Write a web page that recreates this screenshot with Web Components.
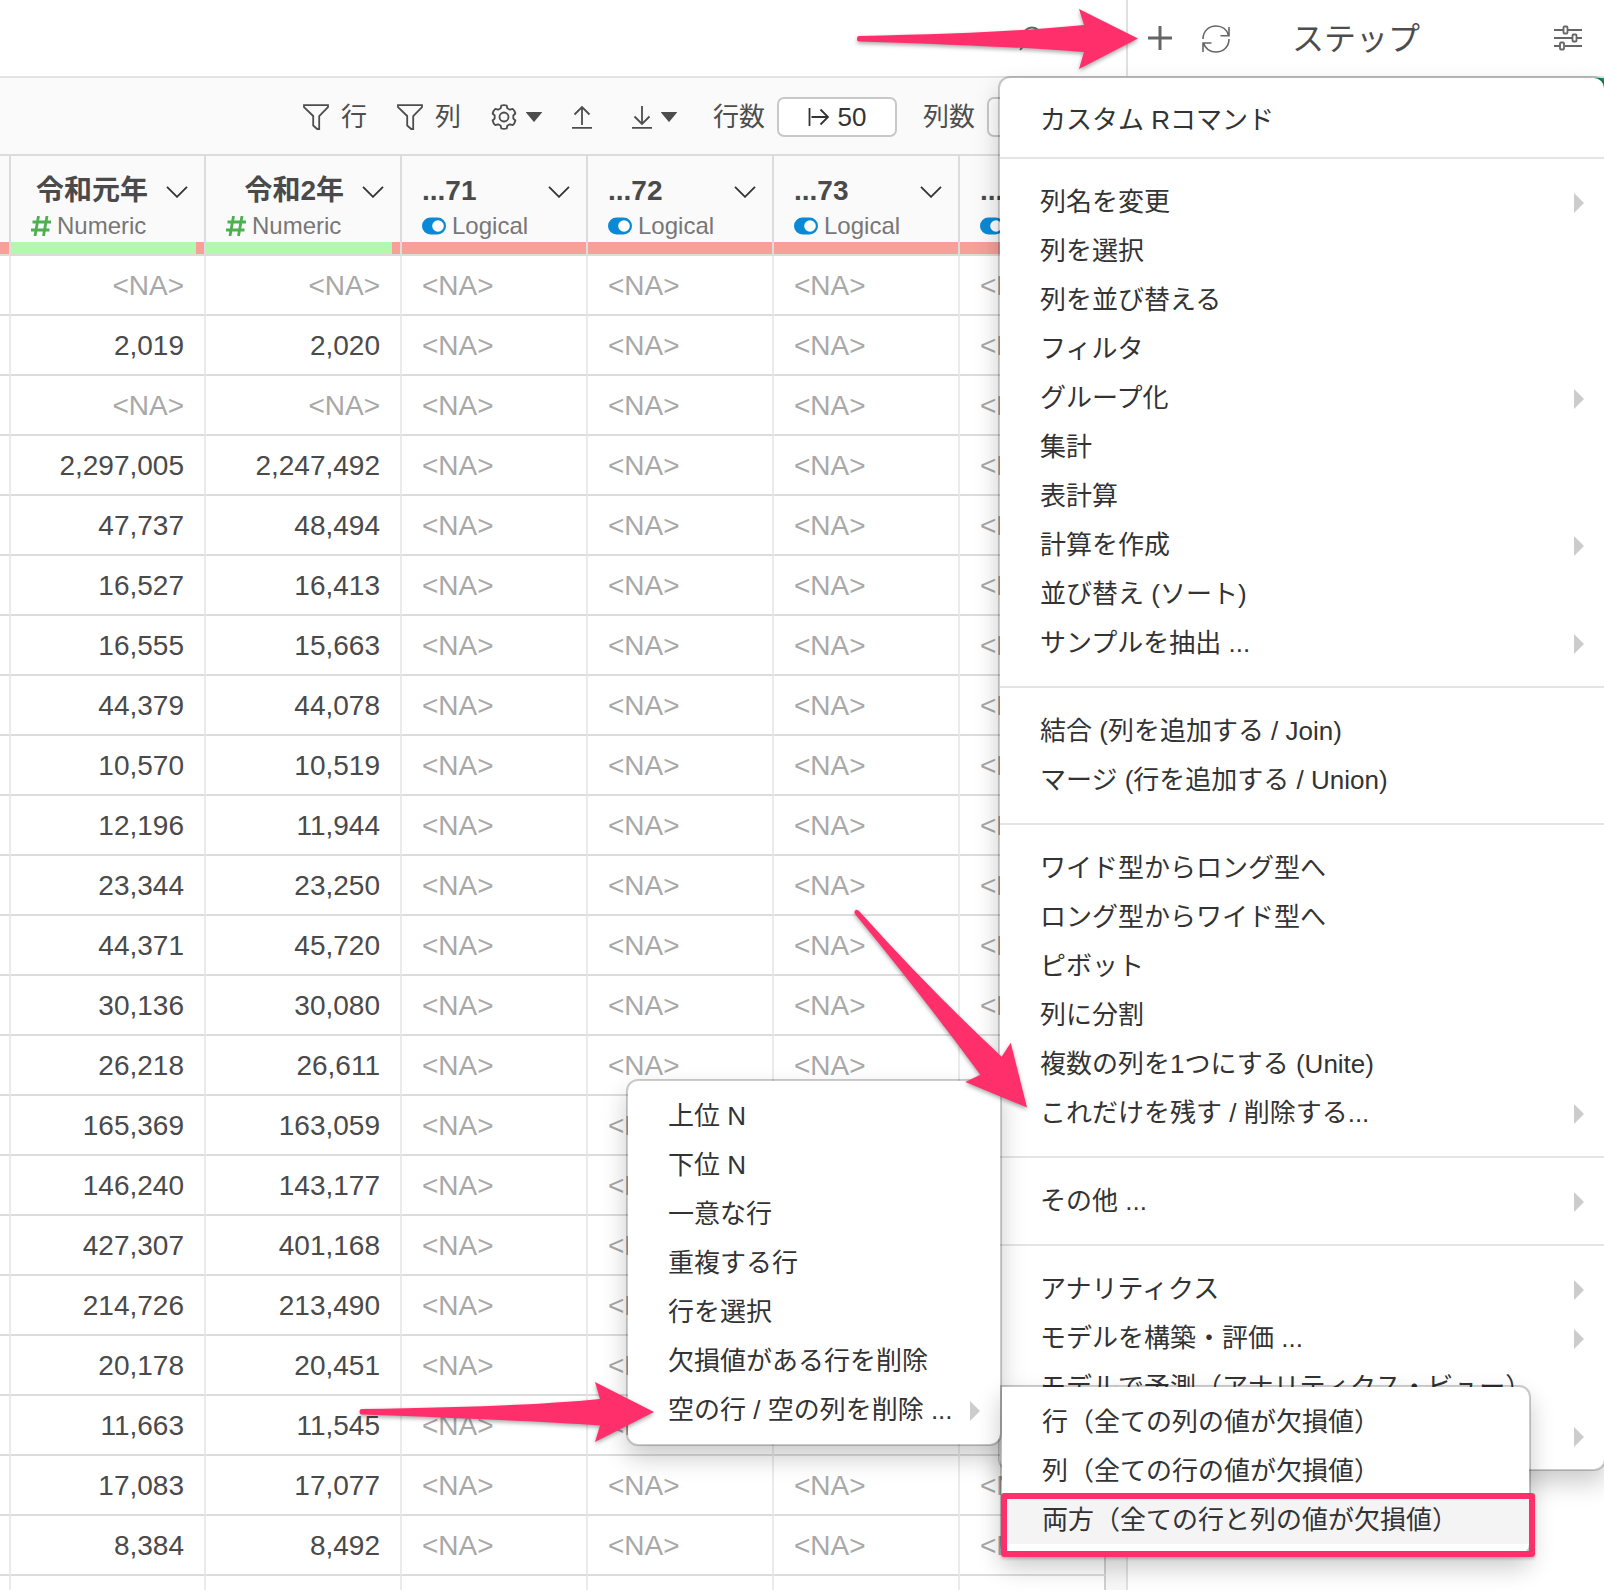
<!DOCTYPE html>
<html lang="ja">
<head>
<meta charset="utf-8">
<title>ステップ</title>
<style>
    body {
        margin: 0;
        font-family: "Liberation Sans", "Noto Sans CJK JP", sans-serif;
        font-size: 26px;
        color: #333;
        background: white;
    }
</style>
</head>
<body>
<data-app>
    <top-bar slot="top"></top-bar>
    <tool-bar slot="main"></tool-bar>
    <data-grid slot="main"></data-grid>
    <step-panel slot="side"></step-panel>

    <drop-menu slot="over" id="steps">
        <menu-group class="lead">
            <menu-item>カスタム Rコマンド</menu-item>
        </menu-group>
        <menu-group>
            <menu-item more>列名を変更</menu-item>
            <menu-item>列を選択</menu-item>
            <menu-item>列を並び替える</menu-item>
            <menu-item>フィルタ</menu-item>
            <menu-item more>グループ化</menu-item>
            <menu-item>集計</menu-item>
            <menu-item>表計算</menu-item>
            <menu-item more>計算を作成</menu-item>
            <menu-item>並び替え (ソート)</menu-item>
            <menu-item more>サンプルを抽出 ...</menu-item>
        </menu-group>
        <menu-group>
            <menu-item>結合 (列を追加する / Join)</menu-item>
            <menu-item>マージ (行を追加する / Union)</menu-item>
        </menu-group>
        <menu-group>
            <menu-item>ワイド型からロング型へ</menu-item>
            <menu-item>ロング型からワイド型へ</menu-item>
            <menu-item>ピボット</menu-item>
            <menu-item>列に分割</menu-item>
            <menu-item>複数の列を1つにする (Unite)</menu-item>
            <menu-item more>これだけを残す / 削除する...</menu-item>
        </menu-group>
        <menu-group>
            <menu-item more>その他 ...</menu-item>
        </menu-group>
        <menu-group class="tail">
            <menu-item more>アナリティクス</menu-item>
            <menu-item more>モデルを構築・評価 ...</menu-item>
            <menu-item>モデルで予測（アナリティクス・ビュー）</menu-item>
            <menu-item more></menu-item>
        </menu-group>
    </drop-menu>

    <drop-menu slot="over" id="keep">
        <menu-group class="only">
            <menu-item>上位 N</menu-item>
            <menu-item>下位 N</menu-item>
            <menu-item>一意な行</menu-item>
            <menu-item>重複する行</menu-item>
            <menu-item>行を選択</menu-item>
            <menu-item>欠損値がある行を削除</menu-item>
            <menu-item more>空の行 / 空の列を削除 ...</menu-item>
        </menu-group>
    </drop-menu>

    <drop-menu slot="over" id="empty">
        <menu-group class="only">
            <menu-item>行（全ての列の値が欠損値）</menu-item>
            <menu-item>列（全ての行の値が欠損値）</menu-item>
            <menu-item active>両方（全ての行と列の値が欠損値）</menu-item>
        </menu-group>
    </drop-menu>

    <mark-layer slot="over"></mark-layer>
</data-app>

<script>
function attach(el, html) {
    const template = document.createElement('template');
    template.innerHTML = html;
    el.attachShadow({ mode: 'open' }).appendChild(template.content.cloneNode(true));
}

const ICONS = {
    filter: [26, 26, '<path d="M1 1.2h24v2L16.2 12v13h-2l-4-3.5V12L1 3.2z"/>'],
    gear: [26, 26, '<path d="M10.3 1.500Q13 .6 15.700 1.500L16.300 4.300 18.800 5.700 21.700 4.800Q23.800 6.700 24.400 9.500L22.300 11.500V14.500L24.400 16.500Q23.800 19.300 21.700 21.200L18.800 20.300 16.300 21.700 15.700 24.500Q13 25.400 10.300 24.500L9.700 21.700 7.200 20.300 4.300 21.200Q2.200 19.300 1.600 16.500L3.700 14.500V11.500L1.600 9.500Q2.200 6.700 4.300 4.800L7.200 5.700 9.700 4.300z" stroke-linejoin="round"/><circle cx="13" cy="13" r="4.500"/>'],
    caret: [16, 10, '<path d="M1.500 1h13L8 8.700z" fill="currentColor"/>'],
    upload: [20, 24, '<path d="M10 20V2M2.500 9.500 10 2l7.500 7.500M0 22.800h20"/>'],
    download: [20, 24, '<path d="M10 1v18M2.500 11.500 10 19l7.500-7.500M0 22.800h20"/>'],
    range: [22, 20, '<path d="M1.500 1v18M3.500 10H20M12.500 2.500 20 10l-7.500 7.500"/>'],
    chevron: [22, 12, '<path d="M1 .8 11 10.800 21 .8"/>'],
    plus: [24, 24, '<path d="M12 0v24M0 12h24" stroke-width="3"/>'],
    search: [24, 26, '<circle cx="14" cy="12" r="9.500"/><path d="M7.500 19 2 25"/>'],
    refresh: [28, 28, '<path d="M1 14C1 6 7 1 14 1c6 0 11 3.500 12.500 9.500M27 2v8.700h-8.500M27 14c0 8-6 13-13 13C8 27 3 23.500 1.500 18M1 27v-9h8.500" stroke-width="1.600"/>'],
    sliders: [28, 26, '<path d="M0 5h9M14 5h14M0 13h18M23 13h5M0 21h6M11 21h17"/><rect x="9.500" y="1.500" width="4" height="7" rx="1"/><rect x="18.500" y="9.500" width="4" height="7" rx="1"/><rect x="6" y="17.500" width="4" height="7" rx="1"/>'],
    hash: [20, 20, '<path d="M7.500 0 4 20M16 0l-3.500 20M1.500 6H20M0 14h18.500" stroke-width="2.800"/>'],
    toggle: [24, 18, '<rect y=".5" width="24" height="17" rx="8.500" fill="currentColor" stroke="none"/><circle cx="16" cy="9" r="5.800" fill="white" stroke="none"/>']
};

class UiIcon extends HTMLElement {
    constructor() {
        super();
        const [w, h, body] = ICONS[this.getAttribute('name')];
        attach(this, `
<style>
    :host { display: inline-flex; flex: none; }
    svg { display: block; }
</style>
<svg width="${w}" height="${h}" viewBox="0 0 ${w} ${h}" fill="none" stroke="currentColor" stroke-width="1.800" aria-hidden="true">${body}</svg>`);
    }
}

class DataApp extends HTMLElement {
    constructor() {
        super();
        attach(this, `
<style>
    :host {
        position: relative;
        display: grid;
        grid-template-columns: minmax(0, 1fr) 478px;
        grid-template-rows: 78px minmax(0, 1fr);
        height: 100vh;
        overflow: hidden;
    }
    .main { grid-row: 2; grid-column: 1; min-width: 0; overflow: hidden; }
    .side { grid-row: 1 / 3; grid-column: 2; display: flex; }
    ::slotted(step-panel) { flex: 1; }
    ::slotted(drop-menu) { position: absolute; }
    ::slotted(#steps) { top: 76px; right: -2px; width: 608px; }
    ::slotted(#keep) { top: 1079px; right: 602px; width: 376px; }
    ::slotted(#empty) { top: 1385px; right: 73px; width: 531px; --corner: 0; }
</style>
<slot name="top"></slot>
<div class="main"><slot name="main"></slot></div>
<div class="side"><slot name="side"></slot></div>
<slot name="over"></slot>`);
    }
}

class TopBar extends HTMLElement {
    constructor() {
        super();
        attach(this, `
<style>
    :host {
        display: flex;
        align-items: center;
        justify-content: flex-end;
        padding-right: 84px;
        border-bottom: 2px solid #e4e4e4;
        color: #666;
    }
    button { display: flex; padding: 0; border: 0; background: none; color: inherit; }
</style>
<button aria-label="検索"><ui-icon name="search"></ui-icon></button>`);
    }
}

class ToolBar extends HTMLElement {
    constructor() {
        super();
        attach(this, `
<style>
    :host {
        display: flex;
        align-items: center;
        box-sizing: border-box;
        height: 76px;
        padding: 2px 0 0 303px;
        background: #fafafa;
        color: #4d4d4d;
        line-height: 40px;
        white-space: nowrap;
    }
    button {
        display: flex;
        align-items: center;
        gap: 12px;
        flex: none;
        padding: 0;
        margin-right: 30px;
        border: 0;
        background: none;
        font: inherit;
        color: inherit;
    }
    .tight { gap: 9px; }
    .down { margin: 0 36px 0 10px; }
    .count {
        justify-content: center;
        gap: 8px;
        box-sizing: border-box;
        width: 120px;
        height: 40px;
        margin: 0 26px 0 12px;
        border: 2px solid #c8c8c8;
        border-radius: 7px;
        background: white;
        line-height: 36px;
        color: #333;
    }
</style>
<button><ui-icon name="filter"></ui-icon>行</button>
<button><ui-icon name="filter"></ui-icon>列</button>
<button class="tight" aria-label="設定"><ui-icon name="gear"></ui-icon><ui-icon name="caret"></ui-icon></button>
<button aria-label="アップロード"><ui-icon name="upload"></ui-icon></button>
<button class="tight down" aria-label="ダウンロード"><ui-icon name="download"></ui-icon><ui-icon name="caret"></ui-icon></button>
<span id="rows">行数</span>
<button class="count" aria-describedby="rows"><ui-icon name="range"></ui-icon>50</button>
<span id="cols">列数</span>
<button class="count" aria-labelledby="cols"></button>`);
    }
}

const NUMBERS = [
    [null, null], ['2,019', '2,020'], [null, null], ['2,297,005', '2,247,492'],
    ['47,737', '48,494'], ['16,527', '16,413'], ['16,555', '15,663'], ['44,379', '44,078'],
    ['10,570', '10,519'], ['12,196', '11,944'], ['23,344', '23,250'], ['44,371', '45,720'],
    ['30,136', '30,080'], ['26,218', '26,611'], ['165,369', '163,059'], ['146,240', '143,177'],
    ['427,307', '401,168'], ['214,726', '213,490'], ['20,178', '20,451'], ['11,663', '11,545'],
    ['17,083', '17,077'], ['8,384', '8,492'], ['', '']
];

const COLUMNS = [
    { name: '令和元年', type: 'Numeric' },
    { name: '令和2年', type: 'Numeric' },
    { name: '...71', type: 'Logical' },
    { name: '...72', type: 'Logical' },
    { name: '...73', type: 'Logical' },
    { name: '...74', type: 'Logical' }
];

class DataGrid extends HTMLElement {
    constructor() {
        super();
        const na = '<span class="na">&lt;NA&gt;</span>';
        const heads = COLUMNS.map(c => `
<th class="${c.type.toLowerCase()}">
    <div class="name"><span>${c.name}</span><ui-icon name="chevron"></ui-icon></div>
    <div class="type"><ui-icon name="${c.type === 'Numeric' ? 'hash' : 'toggle'}"></ui-icon>${c.type}</div>
    <div class="bar"></div>
</th>`).join('');
        const rows = NUMBERS.map(pair => {
            const nums = pair.map(n => `<td class="num">${n === null ? na : n}</td>`).join('');
            const flags = `<td>${pair[0] === '' ? '' : na}</td>`.repeat(4);
            return `<tr><td></td>${nums}${flags}</tr>`;
        }).join('');
        attach(this, `
<style>
    :host { display: block; padding-right: 20px; background: #f7f7f7; }
    table {
        width: 100%;
        table-layout: fixed;
        border-spacing: 0;
        background: white;
        font-size: 28px;
        color: #4a4a4a;
    }
    .edge { width: 11px; }
    .first { width: 195px; }
    .second { width: 196px; }
    .flag { width: 186px; }
    th {
        height: 98px;
        padding: 0;
        border: solid #dcdcdc;
        border-width: 2px 2px 2px 0;
        background: #fafafa;
        text-align: left;
        vertical-align: bottom;
    }
    .name {
        display: flex;
        align-items: center;
        justify-content: space-between;
        padding: 0 16px 0 20px;
        line-height: 38px;
    }
    .name ui-icon { color: #333; padding-top: 2px; }
    .numeric .name { justify-content: flex-end; gap: 18px; }
    .type {
        display: flex;
        align-items: center;
        gap: 6px;
        height: 32px;
        padding: 0 20px;
        font-size: 24px;
        font-weight: normal;
        color: #777;
    }
    .numeric ui-icon[name=hash] { color: #4caf50; }
    .logical ui-icon[name=toggle] { color: #0a8ad6; }
    .bar { height: 12px; background: #f7a09a; }
    .numeric .bar { border-right: 8px solid #f7a09a; background: #b4f7ae; }
    td {
        box-sizing: border-box;
        height: 60px;
        padding: 2px 20px 0;
        border-right: 2px solid #ebebeb;
        border-bottom: 2px solid #dcdcdc;
        line-height: 56px;
        white-space: nowrap;
        overflow: hidden;
    }
    td:first-child { padding: 0; }
    td:last-child, th:last-child { border-right-color: #d0d0d0; }
    .num { text-align: right; }
    .na { color: #a8a8a8; }
</style>
<table>
    <colgroup><col class="edge"><col class="first"><col class="second"><col class="flag"><col class="flag"><col class="flag"><col></colgroup>
    <thead><tr><th><div class="bar"></div></th>${heads}</tr></thead>
    <tbody>${rows}</tbody>
</table>`);
    }
}

class StepPanel extends HTMLElement {
    constructor() {
        super();
        attach(this, `
<style>
    :host { display: block; border-left: 2px solid #e0e0e0; }
    header {
        box-sizing: border-box;
        height: 78px;
        display: flex;
        align-items: center;
        padding: 0 22px 0 20px;
        border-bottom: 2px solid #e4e4e4;
        color: #666;
    }
    h2 { margin: 0 auto 0 62px; padding-top: 2px; font-size: 32px; line-height: 48px; font-weight: normal; color: #4d4d4d; }
    button { display: flex; padding: 0; border: 0; background: none; color: inherit; }
    button + button { margin-left: 30px; padding-top: 2px; }
    .step { height: 60px; margin-left: auto; width: 20px; background: #0f9d58; }
</style>
<header>
    <button aria-label="追加"><ui-icon name="plus"></ui-icon></button>
    <button aria-label="更新"><ui-icon name="refresh"></ui-icon></button>
    <h2>ステップ</h2>
    <button aria-label="表示設定"><ui-icon name="sliders"></ui-icon></button>
</header>
<div class="step"></div>`);
    }
}

class DropMenu extends HTMLElement {
    constructor() {
        super();
        attach(this, `
<style>
    :host {
        box-sizing: border-box;
        display: block;
        border: 2px solid rgba(0, 0, 0, .2);
        border-radius: var(--corner, 12px) 12px 12px 12px;
        background: white;
        background-clip: padding-box;
        box-shadow: 0 12px 24px rgba(0, 0, 0, .2);
    }
</style>
<slot></slot>`);
    }
}

class MenuGroup extends HTMLElement {
    constructor() {
        super();
        attach(this, `
<style>
    :host { display: block; padding: 18px 0 19px; border-bottom: 2px solid #e4e4e4; }
    :host(.lead) { padding: 17px 0 13px; }
    :host(.tail) { padding-bottom: 9px; border-bottom: 0; }
    :host(.only) { padding: 10px 0; border-bottom: 0; }
</style>
<slot></slot>`);
    }
}

class MenuItem extends HTMLElement {
    constructor() {
        super();
        attach(this, `
<style>
    :host { display: block; }
    button {
        display: flex;
        align-items: center;
        justify-content: space-between;
        width: 100%;
        height: 49px;
        padding: 0 20px 0 40px;
        border: 0;
        background: none;
        font: inherit;
        line-height: 48px;
        color: #333;
        text-align: left;
        white-space: nowrap;
    }
    :host([more]) button::after {
        content: "";
        margin-top: 2px;
        border: solid transparent;
        border-width: 10px 0 10px 10px;
        border-left-color: #ccc;
    }
    :host([active]) button { background: #f4f4f4; }
</style>
<button><span><slot></slot></span></button>`);
    }
}

// pink arrows and the frame round the chosen item, over everything else
class MarkLayer extends HTMLElement {
    constructor() {
        super();
        attach(this, `
<style>
    :host { position: absolute; top: 0; right: 0; pointer-events: none; }
    svg { display: block; filter: drop-shadow(0 2px 2px rgba(0, 0, 0, .35)); }
    .frame {
        position: absolute;
        box-sizing: border-box;
        top: 1493px;
        right: 69px;
        width: 534px;
        height: 64px;
        border: 6px solid #ff2f6c;
        border-radius: 3px;
        box-shadow: 0 2px 3px rgba(0, 0, 0, .2);
    }
</style>
<svg width="1604" height="1590" viewBox="0 0 1604 1590" fill="#ff2f6c" aria-hidden="true">
    <path d="M859 36Q1006 33 1084 25L1079 9 1138 38.500 1079 69 1084 52Q1006 46 859 41.500Q857 41.500 857 39Q857 36 859 36z"/>
    <path d="M859.500 911.500Q930 990 1001.700 1056.700L1010.700 1042.700 1027 1107.500 965.300 1082 980.300 1074.700Q924 998 855 914Q853.500 911 856 909.800 858 909.500 859.500 911.500z"/>
    <path d="M361.500 1409Q520 1407 600 1399L595 1382 654 1412 595 1442 600 1425.500Q520 1420 361.500 1414.500Q359.500 1414 359.500 1411.500 359.500 1409 361.500 1409z"/>
</svg>
<div class="frame"></div>`);
    }
}

customElements.define('ui-icon', UiIcon);
customElements.define('data-app', DataApp);
customElements.define('top-bar', TopBar);
customElements.define('tool-bar', ToolBar);
customElements.define('data-grid', DataGrid);
customElements.define('step-panel', StepPanel);
customElements.define('drop-menu', DropMenu);
customElements.define('menu-group', MenuGroup);
customElements.define('menu-item', MenuItem);
customElements.define('mark-layer', MarkLayer);
</script>
</body>
</html>
